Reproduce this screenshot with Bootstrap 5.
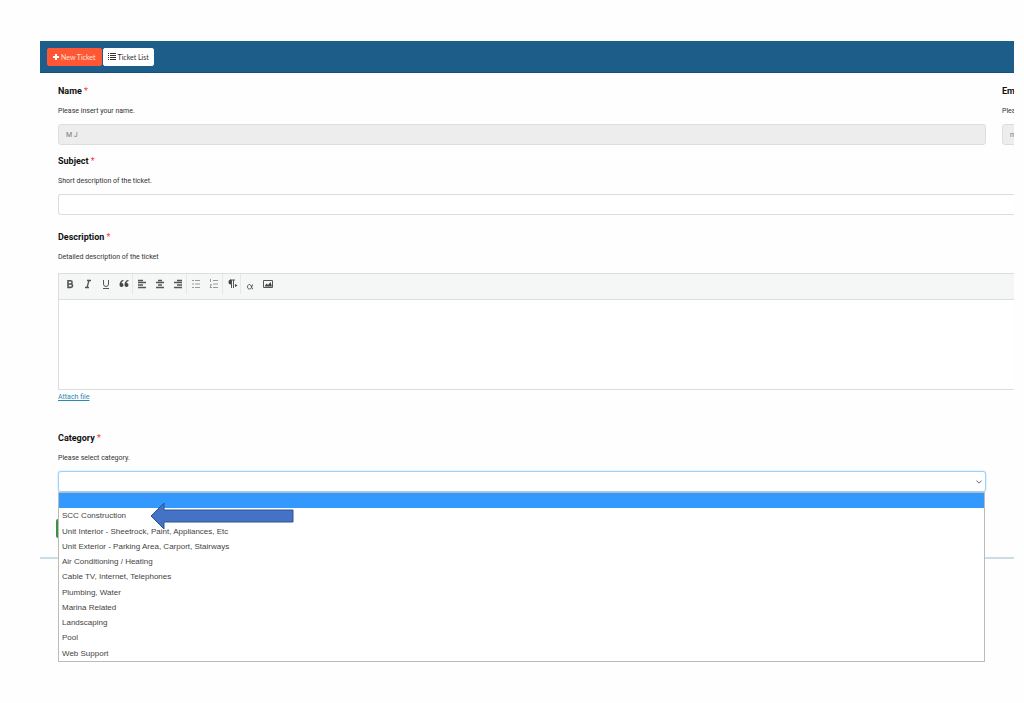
<!DOCTYPE html>
<html lang="en">
<head>
<meta charset="utf-8">
<meta name="viewport" content="width=device-width, initial-scale=1">
<title>New Ticket</title>
<link href="https://cdn.jsdelivr.net/npm/bootstrap@5.3.0/dist/css/bootstrap.min.css" rel="stylesheet">
<style>
  body { font-family: Roboto, "Liberation Sans", sans-serif; font-size: 7px; color: #333; background: #fefefe; padding: 41px 10px 0 40px; }
  .ticket-bar { background: #1c5d8a; height: 32px; padding: 0 7px; gap: 1px; border-bottom: 1px solid #17507a; }
  .ticket-bar .btn { font-family: Lato, "Liberation Sans", sans-serif; font-size: 7px; line-height: 12px; padding: 2px 5px; height: 18px; border-radius: 2px; display: flex; align-items: center; gap: 2px; }
  .btn-new { --bs-btn-color: #ffe3da; --bs-btn-bg: #ff5733; --bs-btn-border-color: #ff5733; --bs-btn-hover-bg: #e64d2d; --bs-btn-hover-color: #fff; }
  .ticket-bar .btn-list { --bs-btn-color: #333; --bs-btn-bg: #fff; --bs-btn-border-color: #fff; --bs-btn-hover-bg: #eee; padding: 2px 4px; }
  .ticket-form { padding: 8px 0 0 18px; }
  .field-title { display: block; font-size: 9px; line-height: 20px; font-weight: 700; color: #111; }
  .field-title span { color: #f33; font-weight: 400; }
  .help { font-size: 7px; line-height: 20px; margin: 0 0 3px; white-space: nowrap; }
  .form-control, .form-select { font-size: 7px; line-height: 12px; height: 21px; min-height: 0; padding: 3px 7px; border-radius: 3px; border-color: #ddd; color: #777; }
  .form-control:disabled { background: #ededed; color: #777; }
  .pair { gap: 16px; margin-bottom: 6px; }
  .half { width: calc(100% - 28px); flex: none; }
  .desc-field { margin-top: 12px; }
  .editor { border: 1px solid #ddd; border-right: 0; margin-top: 6px; }
  .tools { height: 26px; background: #f5f7f7; border-bottom: 1px solid #ddd; padding: 0 2px; }
  .tools button { width: 18px; height: 20px; padding: 0; border: 0; background: none; display: flex; align-items: center; justify-content: center; }
  .tools button.divided { border-right: 1px solid #e6e8e8; }
  .tools svg { width: 12px; height: 12px; fill: none; stroke: #555; }
  .tools .faint svg { stroke: #999; }
  .editor textarea { display: block; height: 89px; border: 0; border-radius: 0; resize: none; }
  .attach { display: block; font-size: 7px; line-height: 14px; color: #2a8ab5; margin-bottom: 24px; }
  .form-select { padding: 3px 16px 3px 7px; border-color: #9fd0f5; box-shadow: 0 0 2px #a6d6fa; background-size: 6px 6px; background-position: right 3px center; }
  .choices { top: 100%; left: 0; right: 1px; z-index: 2; height: 170px; background: #fff; border: 1px solid #bbb; display: grid; grid-auto-rows: 1fr; font-family: "Liberation Sans", Arial, sans-serif; font-size: 8px; line-height: 15px; color: #444; }
  .choices li { padding: 0 3px; white-space: nowrap; }
  .choices .picked { background: #3399ff; }
  .pointer { left: 92px; top: 31px; width: 146px; height: 28px; z-index: 3; }
  .btn-send { width: 60px; height: 19px; margin: 27px 0 19px -2px; padding: 0; border-radius: 2px; border: 0; background: #3f9142; display: block; }
  .rule { height: 2px; background: #cddde7; }
</style>
</head>
<body>
<main class="overflow-hidden pb-5">
  <nav class="ticket-bar d-flex align-items-center" aria-label="Tickets">
    <button type="button" class="btn btn-new"><svg width="6" height="6" viewBox="0 0 6 6" stroke="#fff" stroke-width="2"><path d="M3 0v6M0 3h6"/></svg>New Ticket</button>
    <button type="button" class="btn btn-list"><svg width="8" height="7" viewBox="0 0 8 7" stroke="#333"><path d="M0 .5h1M2 .5h6M0 2.500h1M2 2.500h6M0 4.500h1M2 4.500h6M0 6.500h1M2 6.500h6"/></svg>Ticket List</button>
  </nav>
  <form class="ticket-form">
    <div class="pair d-flex">
      <div class="half">
        <label class="field-title" for="name">Name <span>*</span></label>
        <p class="help">Please insert your name.</p>
        <input class="form-control" id="name" value="M J" disabled>
      </div>
      <div class="half">
        <label class="field-title" for="email">Email <span>*</span></label>
        <p class="help">Please insert your email.</p>
        <input class="form-control" id="email" value="m" disabled>
      </div>
    </div>
    <div>
      <label class="field-title" for="subject">Subject <span>*</span></label>
      <p class="help">Short description of the ticket.</p>
      <input class="form-control border-end-0 rounded-end-0" id="subject">
    </div>
    <div class="desc-field">
      <label class="field-title" for="description">Description <span>*</span></label>
      <p class="help">Detailed description of the ticket</p>
      <div class="editor">
        <div class="tools d-flex align-items-start">
          <button type="button" aria-label="Bold"><svg viewBox="0 0 12 12" stroke-width="1.6"><path d="M4 2.800h2.500a1.500 1.500 0 0 1 0 3.200H4.200h2.600a1.700 1.700 0 0 1 0 3.400H4z"/></svg></button>
          <button type="button" aria-label="Italic"><svg viewBox="0 0 12 12" stroke-width="1.3"><path d="M5 2.500h4M3 9.500h4M7 2.500l-2 7"/></svg></button>
          <button type="button" aria-label="Underline"><svg viewBox="0 0 12 12"><path d="M3.500 2v4a2.500 2.500 0 0 0 5 0V2M3 10.500h6"/></svg></button>
          <button type="button" class="divided" aria-label="Quote"><svg viewBox="0 0 12 12"><path fill="#444" stroke="none" d="M5.500 2C3 2 1.500 4 1.500 7a2 2 0 1 0 2-2c.2-1 .9-1.600 2-2zM10.500 2C8 2 6.500 4 6.500 7a2 2 0 1 0 2-2c.2-1 .9-1.600 2-2z"/></svg></button>
          <button type="button" aria-label="Align left"><svg viewBox="0 0 12 12" stroke-width="1.3"><path d="M2 2.500h5M2 4.500h8M2 7h5M2 9.500h8"/></svg></button>
          <button type="button" aria-label="Align centre"><svg viewBox="0 0 12 12" stroke-width="1.3"><path d="M4 2.500h4M2 4.500h8M4 7h4M2 9.500h8"/></svg></button>
          <button type="button" class="divided" aria-label="Align right"><svg viewBox="0 0 12 12" stroke-width="1.3"><path d="M5 2.500h5M2 4.500h8M5 7h5M2 9.500h8"/></svg></button>
          <button type="button" class="faint" aria-label="Bulleted list"><svg viewBox="0 0 12 12"><path d="M2 2.500h2M5 2.500h5M2 6h2M5 6h5M2 9.500h2M5 9.500h5"/></svg></button>
          <button type="button" class="faint divided" aria-label="Numbered list"><svg viewBox="0 0 12 12"><path d="M2.500 1v3M5 2.500h5M5 6h5M5 9.500h5M2 6.500h1.500l-1.500 3h2"/></svg></button>
          <button type="button" class="divided" aria-label="Text direction"><svg viewBox="0 0 12 12"><path d="M5.500 2v8M7.500 2v8M4 2h5"/><path fill="#444" stroke="none" d="M5 1.500a2.500 2.500 0 0 0 0 5zM9 6l2.500 1.500L9 9z"/></svg></button>
          <button type="button" aria-label="Special character"><svg viewBox="0 0 12 12"><path d="M8.500 6.500C8 9 7 11 5.500 11S3.500 10 3.500 9s.5-2.500 2-2.500S7.500 9 8 10.500l1 .5"/></svg></button>
          <button type="button" aria-label="Image"><svg viewBox="0 0 12 12"><path d="M1.500 2.500h9v7h-9z"/><path fill="#444" stroke="none" d="M2.500 8.500l2-3 1.500 1.500 2.500-3 1.500 4.500z"/></svg></button>
        </div>
        <textarea class="form-control" id="description"></textarea>
      </div>
      <a class="attach" href="#">Attach file</a>
    </div>
    <div class="half">
      <label class="field-title" for="category">Category <span>*</span></label>
      <p class="help">Please select category.</p>
      <div class="position-relative">
        <select class="form-select" id="category"><option></option></select>
        <ul class="choices list-unstyled position-absolute m-0" aria-label="Category choices">
          <li class="picked"></li>
          <li>SCC Construction</li>
          <li>Unit Interior - Sheetrock, Paint, Appliances, Etc</li>
          <li>Unit Exterior - Parking Area, Carport, Stairways</li>
          <li>Air Conditioning / Heating</li>
          <li>Cable TV, Internet, Telephones</li>
          <li>Plumbing, Water</li>
          <li>Marina Related</li>
          <li>Landscaping</li>
          <li>Pool</li>
          <li>Web Support</li>
        </ul>
        <svg class="pointer position-absolute" viewBox="0 0 146 28" aria-hidden="true"><path d="M1 14L14 1v7h129v12H14v7z" fill="#4472c4" stroke="#2f528f"/></svg>
      </div>
    </div>
    <button type="submit" class="btn-send" aria-label="Submit ticket"></button>
  </form>
  <div class="rule"></div>
  <div class="pt-5 pb-5"></div>
</main>
<script src="https://cdn.jsdelivr.net/npm/bootstrap@5.3.0/dist/js/bootstrap.bundle.min.js"></script>
</body>
</html>
